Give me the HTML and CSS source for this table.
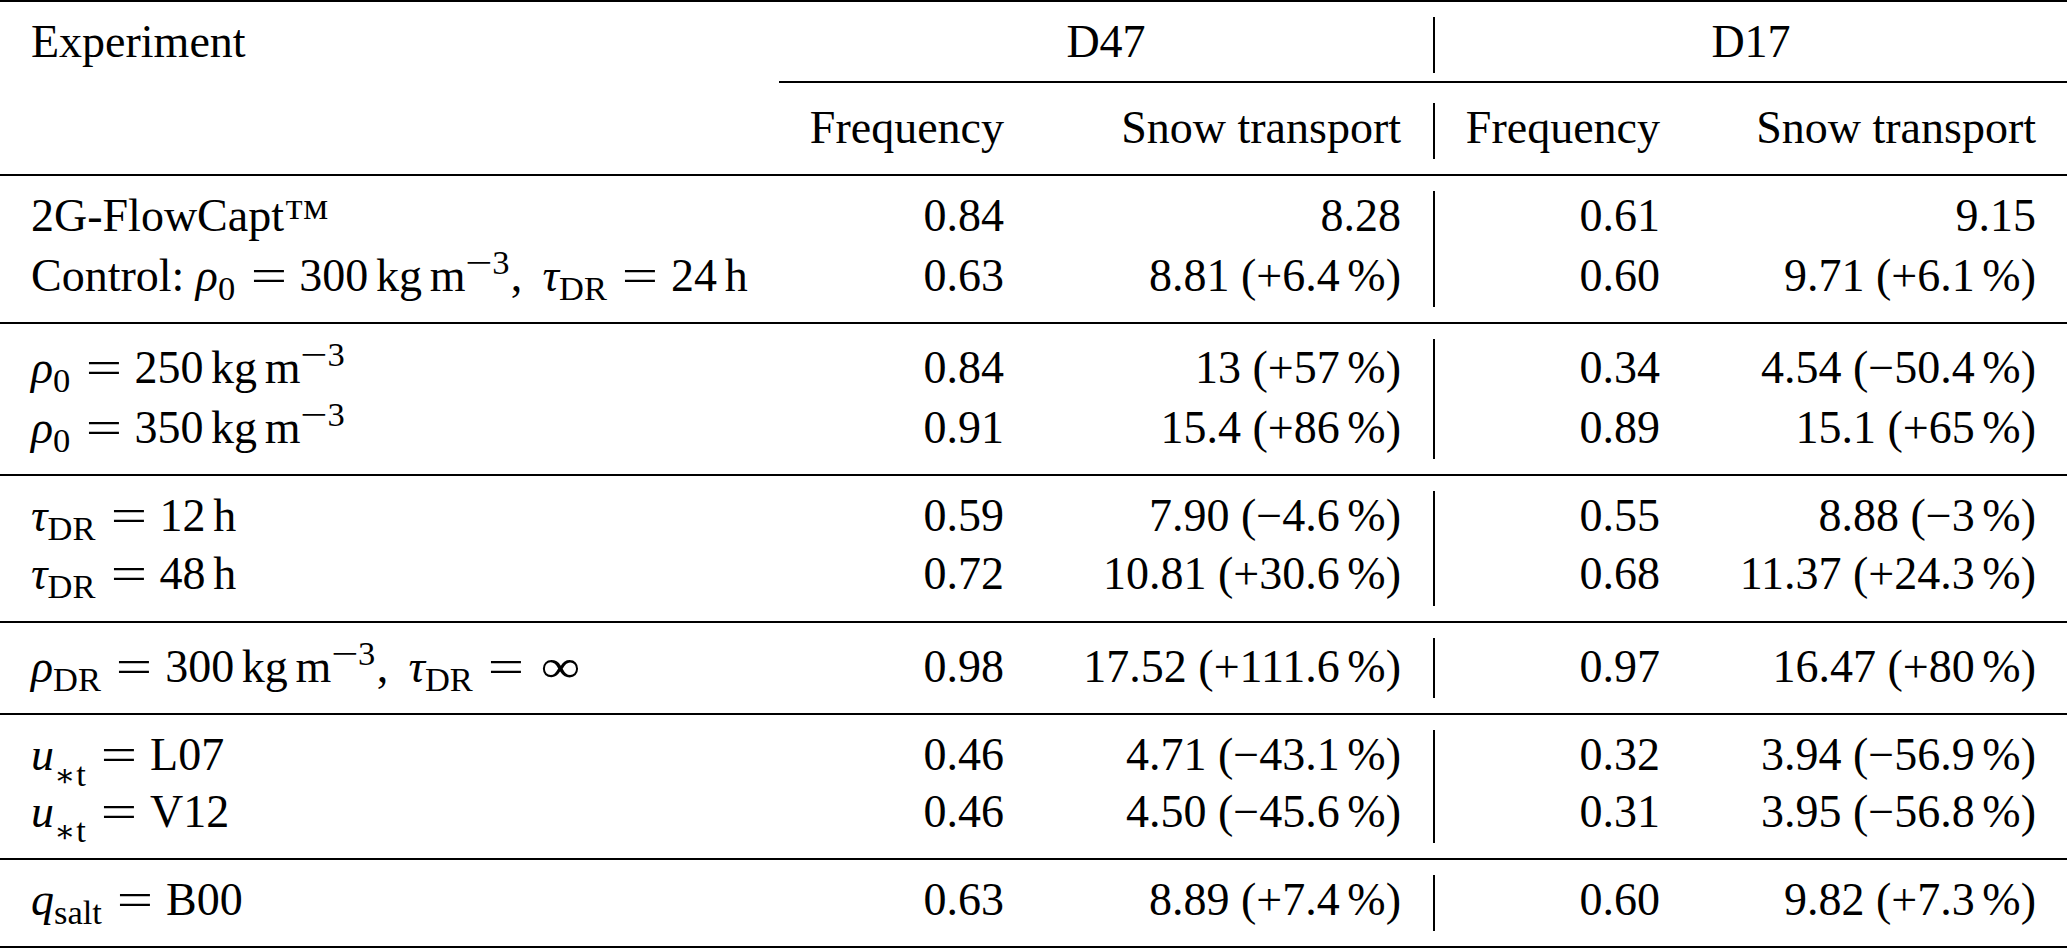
FILE: index.html
```html
<!DOCTYPE html>
<html lang="en">
<head>
<meta charset="utf-8">
<title>Snow transport experiments</title>
<link rel="stylesheet" href="styles.css">
</head>
<body>
<div class="tbl">
  <div class="head">
    <div class="row hrow">
      <div class="cell c1">Experiment</div>
      <div class="cell span-a">D47</div>
      <div class="cell span-b">D17</div>
    </div>
    <div class="cmid"></div>
    <div class="row hrow hrow2">
      <div class="cell c1"></div>
      <div class="cell c2">Frequency</div>
      <div class="cell c3">Snow transport</div>
      <div class="cell c4">Frequency</div>
      <div class="cell c5">Snow transport</div>
    </div>
  </div>

  <div class="group">
    <div class="row">
      <div class="cell c1">2G-FlowCapt™</div>
      <div class="cell c2">0.84</div>
      <div class="cell c3">8.28</div>
      <div class="cell c4">0.61</div>
      <div class="cell c5">9.15</div>
    </div>
    <div class="row tall">
      <div class="cell c1">Control: <span class="mi">ρ</span><sub>0</sub><span class="eq"><span class="g">=</span></span>300<span class="ts"></span>kg<span class="ts"></span>m<sup><span class="mm"><span class="g">−</span></span>3</sup>,<span class="sp"> </span><span class="mi">τ</span><sub>DR</sub><span class="eq"><span class="g">=</span></span>24<span class="ts"></span>h</div>
      <div class="cell c2">0.63</div>
      <div class="cell c3">8.81 (+6.4<span class="ts"></span>%)</div>
      <div class="cell c4">0.60</div>
      <div class="cell c5">9.71 (+6.1<span class="ts"></span>%)</div>
    </div>
  </div>

  <div class="group">
    <div class="row tall">
      <div class="cell c1"><span class="mi">ρ</span><sub>0</sub><span class="eq"><span class="g">=</span></span>250<span class="ts"></span>kg<span class="ts"></span>m<sup><span class="mm"><span class="g">−</span></span>3</sup></div>
      <div class="cell c2">0.84</div>
      <div class="cell c3">13 (+57<span class="ts"></span>%)</div>
      <div class="cell c4">0.34</div>
      <div class="cell c5">4.54 (−50.4<span class="ts"></span>%)</div>
    </div>
    <div class="row tall">
      <div class="cell c1"><span class="mi">ρ</span><sub>0</sub><span class="eq"><span class="g">=</span></span>350<span class="ts"></span>kg<span class="ts"></span>m<sup><span class="mm"><span class="g">−</span></span>3</sup></div>
      <div class="cell c2">0.91</div>
      <div class="cell c3">15.4 (+86<span class="ts"></span>%)</div>
      <div class="cell c4">0.89</div>
      <div class="cell c5">15.1 (+65<span class="ts"></span>%)</div>
    </div>
  </div>

  <div class="group">
    <div class="row mid">
      <div class="cell c1"><span class="mi">τ</span><sub>DR</sub><span class="eq"><span class="g">=</span></span>12<span class="ts"></span>h</div>
      <div class="cell c2">0.59</div>
      <div class="cell c3">7.90 (−4.6<span class="ts"></span>%)</div>
      <div class="cell c4">0.55</div>
      <div class="cell c5">8.88 (−3<span class="ts"></span>%)</div>
    </div>
    <div class="row mid">
      <div class="cell c1"><span class="mi">τ</span><sub>DR</sub><span class="eq"><span class="g">=</span></span>48<span class="ts"></span>h</div>
      <div class="cell c2">0.72</div>
      <div class="cell c3">10.81 (+30.6<span class="ts"></span>%)</div>
      <div class="cell c4">0.68</div>
      <div class="cell c5">11.37 (+24.3<span class="ts"></span>%)</div>
    </div>
  </div>

  <div class="group">
    <div class="row tall">
      <div class="cell c1"><span class="mi">ρ</span><sub>DR</sub><span class="eq"><span class="g">=</span></span>300<span class="ts"></span>kg<span class="ts"></span>m<sup><span class="mm"><span class="g">−</span></span>3</sup>,<span class="sp"> </span><span class="mi">τ</span><sub>DR</sub><span class="eq"><span class="g">=</span></span><span class="inf"><span class="g">∞</span></span></div>
      <div class="cell c2">0.98</div>
      <div class="cell c3">17.52 (+111.6<span class="ts"></span>%)</div>
      <div class="cell c4">0.97</div>
      <div class="cell c5">16.47 (+80<span class="ts"></span>%)</div>
    </div>
  </div>

  <div class="group">
    <div class="row semi">
      <div class="cell c1"><span class="mi">u</span><sub class="low"><span class="ast">∗</span>t</sub><span class="eq"><span class="g">=</span></span>L07</div>
      <div class="cell c2">0.46</div>
      <div class="cell c3">4.71 (−43.1<span class="ts"></span>%)</div>
      <div class="cell c4">0.32</div>
      <div class="cell c5">3.94 (−56.9<span class="ts"></span>%)</div>
    </div>
    <div class="row semi">
      <div class="cell c1"><span class="mi">u</span><sub class="low"><span class="ast">∗</span>t</sub><span class="eq"><span class="g">=</span></span>V12</div>
      <div class="cell c2">0.46</div>
      <div class="cell c3">4.50 (−45.6<span class="ts"></span>%)</div>
      <div class="cell c4">0.31</div>
      <div class="cell c5">3.95 (−56.8<span class="ts"></span>%)</div>
    </div>
  </div>

  <div class="group last">
    <div class="row">
      <div class="cell c1"><span class="mi">q</span><sub>salt</sub><span class="eq"><span class="g">=</span></span>B00</div>
      <div class="cell c2">0.63</div>
      <div class="cell c3">8.89 (+7.4<span class="ts"></span>%)</div>
      <div class="cell c4">0.60</div>
      <div class="cell c5">9.82 (+7.3<span class="ts"></span>%)</div>
    </div>
  </div>
</div>
</body>
</html>
```

FILE: styles.css
```css
html, body {
  margin: 0;
  padding: 0;
  background: #ffffff;
}

body {
  font-family: "Liberation Serif", "DejaVu Serif", serif;
  font-size: 46px;
  color: #000000;
}

.tbl {
  width: 2067px;
}

.head {
  border-top: 2px solid #000;
  padding-top: 15px;
  padding-bottom: 15px;
}

.row {
  display: grid;
  grid-template-columns: 779px 256px 400px 256px 376px;
  height: 56px;
}

.row.tall { height: 60px; }
.row.mid { height: 57.5px; }
.row.semi { height: 56.5px; }

.cell {
  box-sizing: border-box;
  white-space: nowrap;
  line-height: 49px;
  text-align: right;
  padding-right: 31px;
}

.row.tall .cell { padding-top: 4px; }

.c1 {
  text-align: left;
  padding-left: 31px;
  padding-right: 0;
}

.c3 {
  padding-right: 32px;
  border-right: 2px solid #000;
}

.span-a {
  grid-column: 2 / 4;
  text-align: center;
  padding-right: 0;
  border-right: 2px solid #000;
}

.span-b {
  grid-column: 4 / 6;
  text-align: center;
  padding-right: 0;
}

.cmid {
  margin-left: 779px;
  margin-top: 8px;
  margin-bottom: 20px;
  border-top: 2px solid #000;
}

.group {
  border-top: 2px solid #000;
  padding: 15px 0;
}

.group.last {
  border-bottom: 2px solid #000;
}

.mi {
  font-style: italic;
}

/* thin space between a number and its unit */
.ts {
  display: inline-block;
  width: 0.167em;
}

/* interword space after a comma in the math rows */
.sp {
  display: inline-block;
  width: 0.44em;
}

/* relation sign with thick spaces, TeX-like width */
.eq {
  display: inline-block;
  width: 0.778em;
  text-align: center;
  margin: 0 0.278em;
}

.g {
  display: inline-block;
  transform: scaleX(1.4);
}

.inf {
  display: inline-block;
  width: 1em;
  text-align: center;
}

.inf .g {
  transform: scaleX(1.2);
}

sub, sup {
  font-size: 0.75em;
  line-height: 0;
}

sub {
  vertical-align: -0.27em;
  margin-right: 0.08em;
}

sub.low {
  vertical-align: -0.45em;
}

sup {
  vertical-align: 0.5em;
  margin-right: 0.04em;
}

.mm {
  display: inline-block;
  width: 0.778em;
  text-align: center;
}

.ast {
  font-family: "DejaVu Serif", serif;
  font-size: 0.9em;
  margin-right: 0.04em;
}
```
